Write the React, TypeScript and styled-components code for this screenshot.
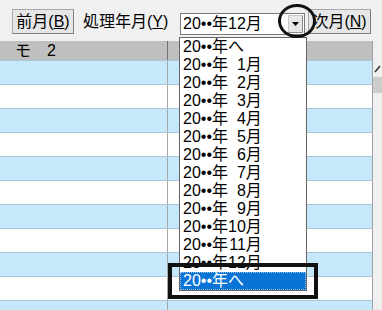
import React from 'react';
import styled, { createGlobalStyle } from 'styled-components';

const GlobalStyle = createGlobalStyle`
  html, body {
    margin: 0;
    padding: 0;
    background: #f0f0f0;
  }
  body {
    font-family: "Liberation Sans", "Noto Sans CJK JP", sans-serif;
    font-size: 16px;
    color: #000;
  }
`;

const Screen = styled.div`
  position: relative;
  width: 382px;
  height: 310px;
  overflow: hidden;
  background: #f0f0f0;
`;

const Toolbar = styled.div`
  display: flex;
  align-items: flex-start;
  height: 41px;
  box-sizing: border-box;
  padding: 9px 0 0 12px;
`;

const Button = styled.div<{ $w: number; $ml?: number }>`
  width: ${(p) => p.$w}px;
  height: 25px;
  margin-left: ${(p) => p.$ml ?? 0}px;
  box-sizing: border-box;
  display: flex;
  align-items: center;
  justify-content: center;
  background: #e6e6e6;
  border: 1px solid #a9a9a9;
  border-right-color: #7d7d7d;
  border-bottom-color: #7d7d7d;
  line-height: 25px;
  white-space: nowrap;
`;

const Label = styled.div`
  width: 97px;
  margin-left: 9px;
  height: 25px;
  line-height: 25px;
  white-space: nowrap;
`;

const Combo = styled.div`
  position: relative;
  width: 125px;
  height: 22px;
  margin-top: 4px;
  box-sizing: border-box;
  background: #fff;
  border: 1px solid #7a7a7a;
  display: flex;
  align-items: center;
  padding-left: 2px;
`;

const ComboText = styled.span`
  flex: 1;
  line-height: 20px;
  white-space: nowrap;
`;

const DropButton = styled.div`
  width: 15px;
  height: 18px;
  margin-right: 1px;
  box-sizing: border-box;
  background: #e6e6e6;
  border: 1px solid #c8c8c8;
  border-right-color: #8a8a8a;
  border-bottom-color: #8a8a8a;
  display: flex;
  align-items: center;
  justify-content: center;
`;

const GridArea = styled.div`
  display: flex;
  align-items: stretch;
`;

const Grid = styled.div`
  width: 373px;
  display: flex;
  flex-direction: column;
`;

const HeaderRow = styled.div`
  display: flex;
  height: 19px;
  background: #bfbfbf;
  border-right: 1px solid #a0a0a0;
`;

const HeaderCell = styled.div<{ $w?: number }>`
  ${(p) => (p.$w ? `width: ${p.$w}px; border-right: 1px solid #707070;` : 'flex: 1;')}
  box-sizing: border-box;
  padding-left: 15px;
  line-height: 19px;
  white-space: nowrap;
`;

const Row = styled.div<{ $alt: boolean }>`
  display: flex;
  height: 24px;
  box-sizing: border-box;
  border-top: 1px solid #a9c6d6;
  border-right: 1px solid #a0a0a0;
  background: ${(p) => (p.$alt ? '#c5e8fb' : '#ffffff')};
`;

const Cell = styled.div<{ $w?: number }>`
  ${(p) => (p.$w ? `width: ${p.$w}px; border-right: 1px solid #a6a6a6;` : 'flex: 1;')}
  box-sizing: border-box;
`;

const ScrollStrip = styled.div`
  width: 9px;
  background: #f0f0f0;
  display: flex;
  flex-direction: column;
  padding-top: 24px;
`;

const Thumb = styled.div`
  height: 16px;
  margin-top: 4px;
  background: #cdcdcd;
`;

const DropList = styled.div`
  position: absolute;
  left: 179px;
  top: 37px;
  width: 128px;
  box-sizing: border-box;
  background: #fff;
  border: 1px solid #646464;
  display: flex;
  flex-direction: column;
`;

const Item = styled.div<{ $selected?: boolean }>`
  height: 18px;
  line-height: 18px;
  box-sizing: border-box;
  padding-left: 3px;
  white-space: nowrap;
  background: ${(p) => (p.$selected ? '#0a74d6' : 'transparent')};
  color: ${(p) => (p.$selected ? '#fff' : '#000')};
  outline: ${(p) => (p.$selected ? '1px dotted #9ac4ee' : 'none')};
  outline-offset: -1px;
`;

const MonthNum = styled.span`
  display: inline-block;
  min-width: 2ch;
  text-align: right;
`;

const Ellipse = styled.div`
  position: absolute;
  left: 278px;
  top: 4px;
  width: 38px;
  height: 34px;
  box-sizing: border-box;
  border: 3px solid #111;
  border-radius: 50%;
`;

const Highlight = styled.div`
  position: absolute;
  left: 168px;
  top: 263px;
  width: 150px;
  height: 36px;
  box-sizing: border-box;
  border: 4px solid #111;
`;

const months = ['1', '2', '3', '4', '5', '6', '7', '8', '9', '10', '11', '12'];

export default function App() {
  const rows = Array.from({ length: 11 }, (_, i) => i);
  return (
    <>
      <GlobalStyle />
      <Screen>
        <Toolbar>
          <Button $w={62}>
            前月(<u>B</u>)
          </Button>
          <Label>
            処理年月(<u>Y</u>)
          </Label>
          <Combo>
            <ComboText>20••年12月</ComboText>
            <DropButton>
              <svg width="7" height="4" viewBox="0 0 7 4">
                <polygon points="0,0 7,0 3.5,4" fill="#000" />
              </svg>
            </DropButton>
          </Combo>
          <Button $w={63} $ml={3}>
            次月(<u>N</u>)
          </Button>
        </Toolbar>
        <GridArea>
          <Grid>
            <HeaderRow>
              <HeaderCell $w={168}>モ　2</HeaderCell>
              <HeaderCell />
            </HeaderRow>
            {rows.map((i) => (
              <Row key={i} $alt={i % 2 === 0}>
                <Cell $w={168} />
                <Cell />
              </Row>
            ))}
          </Grid>
          <ScrollStrip>
            <svg width="9" height="8" viewBox="0 0 9 8">
              <polyline points="2,7 7,1" stroke="#333" strokeWidth="1.5" fill="none" />
            </svg>
            <Thumb />
          </ScrollStrip>
        </GridArea>
        <DropList>
          <Item>20••年へ</Item>
          {months.map((m) => (
            <Item key={m}>
              20••年<MonthNum>{m}</MonthNum>月
            </Item>
          ))}
          <Item $selected>20••年へ</Item>
        </DropList>
        <Ellipse />
        <Highlight />
      </Screen>
    </>
  );
}
